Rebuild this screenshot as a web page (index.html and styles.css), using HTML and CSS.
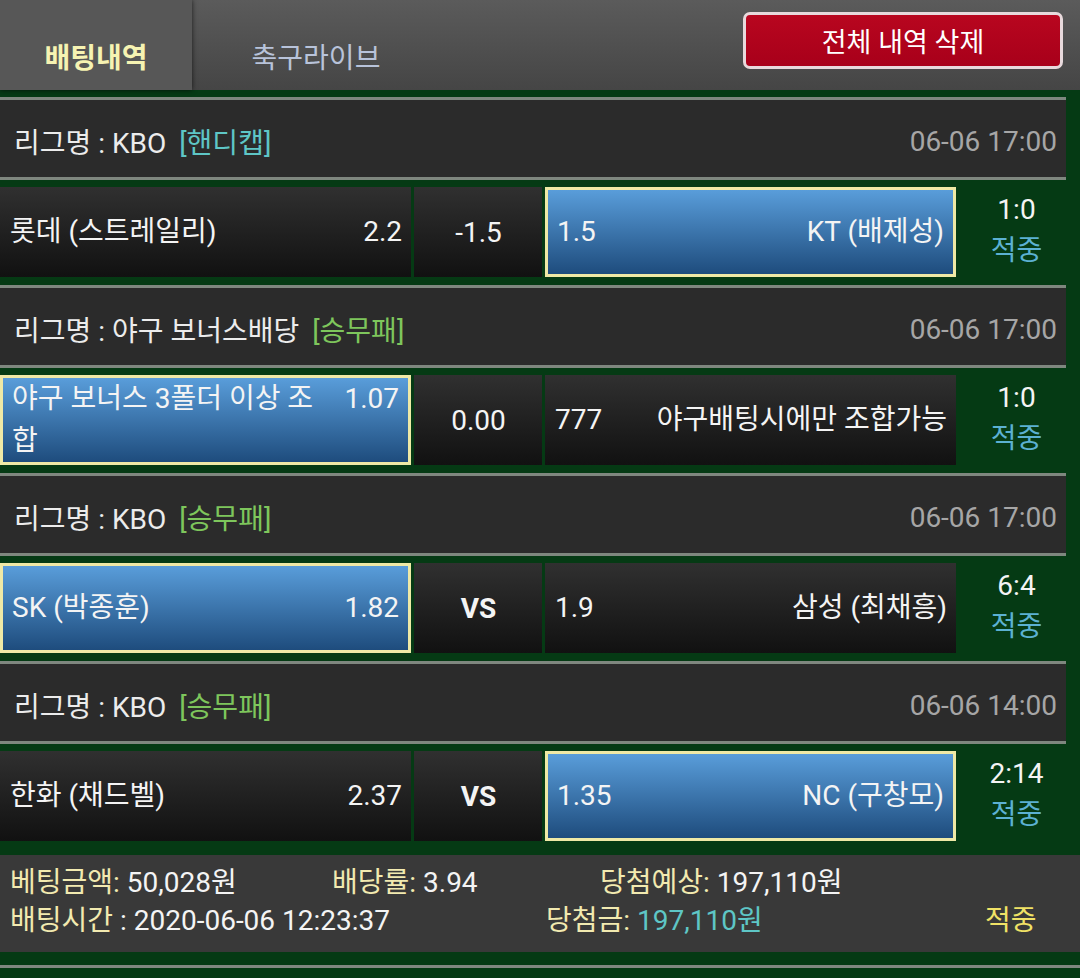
FILE: index.html
```html
<!DOCTYPE html>
<html lang="ko">

<head>
    <meta charset="UTF-8">
    <meta name="viewport" content="width=device-width, initial-scale=1.0">
    <title>배팅내역</title>
    <link rel="stylesheet" href="styles.css">
</head>

<body>
    <div class="top">
        <div class="tab active">배팅내역</div>
        <div class="tab">축구라이브</div>
        <button class="del-all">전체 내역 삭제</button>
    </div>

    <div class="list">
        <div class="bet">
            <div class="league">
                <span>리그명 : KBO <span class="type handi">[핸디캡]</span></span>
                <span class="time">06-06 17:00</span>
            </div>
            <div class="match">
                <div class="cell">
                    <span class="name">롯데 (스트레일리)</span>
                    <span class="odds">2.2</span>
                </div>
                <div class="cell mid">-1.5</div>
                <div class="cell picked">
                    <span class="odds">1.5</span>
                    <span class="name right">KT (배제성)</span>
                </div>
                <div class="result">
                    <div>1:0</div>
                    <div class="hit">적중</div>
                </div>
            </div>
        </div>

        <div class="bet">
            <div class="league">
                <span>리그명 : 야구 보너스배당 <span class="type wdl">[승무패]</span></span>
                <span class="time">06-06 17:00</span>
            </div>
            <div class="match">
                <div class="cell picked two-line">
                    <span class="name">야구 보너스 3폴더 이상 조합</span>
                    <span class="odds">1.07</span>
                </div>
                <div class="cell mid">0.00</div>
                <div class="cell">
                    <span class="odds">777</span>
                    <span class="name right">야구배팅시에만 조합가능</span>
                </div>
                <div class="result">
                    <div>1:0</div>
                    <div class="hit">적중</div>
                </div>
            </div>
        </div>

        <div class="bet">
            <div class="league">
                <span>리그명 : KBO <span class="type wdl">[승무패]</span></span>
                <span class="time">06-06 17:00</span>
            </div>
            <div class="match">
                <div class="cell picked">
                    <span class="name">SK (박종훈)</span>
                    <span class="odds">1.82</span>
                </div>
                <div class="cell mid vs">VS</div>
                <div class="cell">
                    <span class="odds">1.9</span>
                    <span class="name right">삼성 (최채흥)</span>
                </div>
                <div class="result">
                    <div>6:4</div>
                    <div class="hit">적중</div>
                </div>
            </div>
        </div>

        <div class="bet">
            <div class="league">
                <span>리그명 : KBO <span class="type wdl">[승무패]</span></span>
                <span class="time">06-06 14:00</span>
            </div>
            <div class="match">
                <div class="cell">
                    <span class="name">한화 (채드벨)</span>
                    <span class="odds">2.37</span>
                </div>
                <div class="cell mid vs">VS</div>
                <div class="cell picked">
                    <span class="odds">1.35</span>
                    <span class="name right">NC (구창모)</span>
                </div>
                <div class="result">
                    <div>2:14</div>
                    <div class="hit">적중</div>
                </div>
            </div>
        </div>
    </div>

    <div class="summary">
        <div class="sum-row">
            <span class="s1"><span class="lbl">베팅금액:</span> 50,028원</span>
            <span class="s2"><span class="lbl">배당률:</span> 3.94</span>
            <span><span class="lbl">당첨예상:</span> 197,110원</span>
        </div>
        <div class="sum-row">
            <span class="s3"><span class="lbl">배팅시간</span> : 2020-06-06 12:23:37</span>
            <span class="s4"><span class="lbl">당첨금:</span> <span class="win">197,110원</span></span>
            <span class="final">적중</span>
        </div>
    </div>
    <div class="foot-line"></div>
</body>

</html>
```

FILE: styles.css
```css
body {
    margin: 0;
    width: 1080px;
    background: #053a14;
    color: #f4f4f4;
    font-family: Roboto, "Noto Sans CJK KR", sans-serif;
    font-size: 28px;
}

.top {
    display: flex;
    align-items: stretch;
    height: 90px;
    background: linear-gradient(#5b5b5b, #454545);
}

.tab {
    display: flex;
    align-items: center;
    justify-content: center;
    padding-top: 22px;
    box-sizing: border-box;
    color: #b8c3da;
}

.tab.active {
    width: 192px;
    background: #575757;
    color: #f6f3b2;
    font-weight: bold;
    box-shadow: 0 0 5px rgba(0, 0, 0, 0.7);
    position: relative;
}

.tab:nth-child(2) {
    width: 248px;
}

.del-all {
    margin: 12px 17px 0 auto;
    width: 320px;
    height: 57px;
    border: 3px solid #e8d9dc;
    border-radius: 7px;
    background: linear-gradient(#b8061f, #a8001a);
    color: #fff;
    font-family: Roboto, "Noto Sans CJK KR", sans-serif;
    font-size: 27px;
    padding: 0;
}

.list {
    padding-top: 7px;
}

.league {
    width: 1066px;
    height: 72px;
    padding-top: 5px;
    border-top: 3px solid #7f877f;
    border-bottom: 3px solid #7f877f;
    background: #2b2b2b;
    display: flex;
    align-items: center;
    justify-content: space-between;
    color: #ececec;
}

.league > span:first-child {
    padding-left: 14px;
}

.type {
    margin-left: 6px;
}

.handi {
    color: #5ec6c6;
}

.wdl {
    color: #7ec65c;
}

.time {
    color: #a6a6a6;
    padding-right: 9px;
}

.match {
    display: grid;
    grid-template-columns: 411px 128px 411px 111px;
    column-gap: 3px;
    height: 90px;
    margin: 7px 0 8px;
}

.cell {
    display: flex;
    align-items: center;
    justify-content: space-between;
    gap: 24px;
    padding: 0 9px 0 10px;
    background: linear-gradient(#303030, #111);
}

.cell.picked {
    border: 3px solid #efe9a6;
    padding: 0 9px 0 9px;
    background: linear-gradient(#599dda, #1e4c7d);
}

.cell.two-line {
    align-items: baseline;
}

.cell .name,
.cell .odds {
    line-height: 42px;
}

.cell .right {
    text-align: right;
}

.cell .odds {
    flex-shrink: 0;
}

.cell.mid {
    justify-content: center;
}

.cell.vs {
    font-weight: bold;
}

.result {
    display: flex;
    flex-direction: column;
    justify-content: center;
    align-items: center;
    line-height: 41px;
    padding-left: 4px;
    padding-bottom: 4px;
}

.hit {
    color: #5cb1d2;
}

.summary {
    margin-top: 14px;
    height: 97px;
    box-sizing: border-box;
    padding: 9px 0 0 10px;
    background: #393939;
}

.sum-row {
    display: flex;
    line-height: 38px;
}

.lbl {
    color: #f2eab0;
}

.s1 {
    width: 322px;
}

.s2 {
    width: 268px;
}

.s3 {
    width: 536px;
}

.s4 {
    width: 439px;
}

.win {
    color: #5ec6c6;
}

.final {
    color: #f0e266;
}

.foot-line {
    margin-top: 13px;
    height: 3px;
    background: #7f877f;
}
```
